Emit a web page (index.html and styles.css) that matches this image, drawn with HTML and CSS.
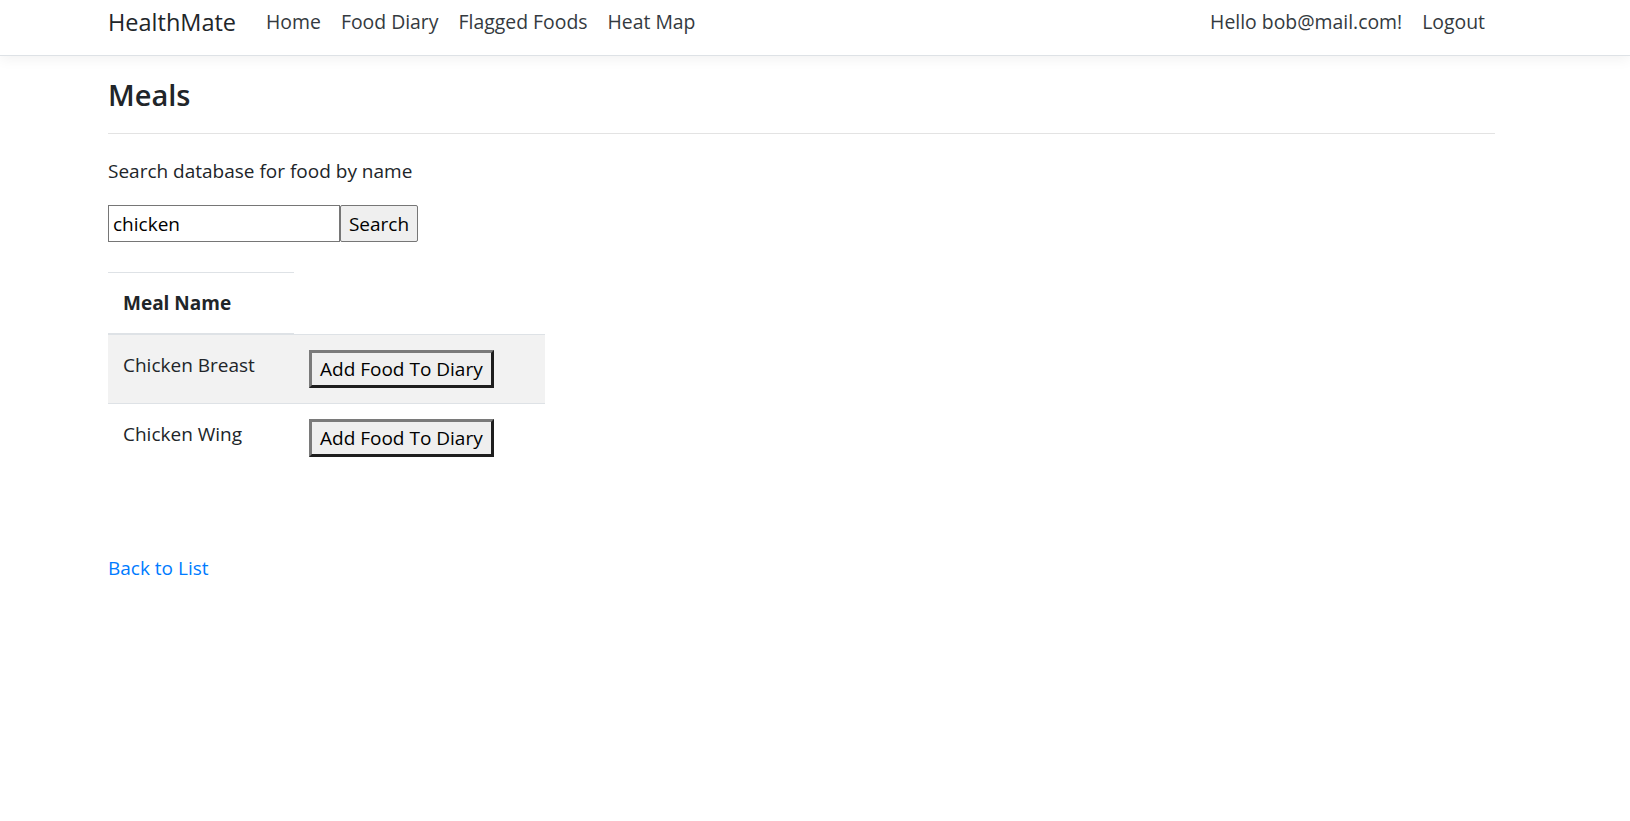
FILE: index.html
```html
<!DOCTYPE html>
<html lang="en">
<head>
<meta charset="utf-8">
<title>Meals - HealthMate</title>
<link rel="stylesheet" href="styles.css">
</head>
<body>
<header class="topbar">
  <nav class="container navbar">
    <a class="brand" href="#">HealthMate</a>
    <ul class="nav-list">
      <li><a class="nav-link" href="#">Home</a></li>
      <li><a class="nav-link" href="#">Food Diary</a></li>
      <li><a class="nav-link" href="#">Flagged Foods</a></li>
      <li><a class="nav-link" href="#">Heat Map</a></li>
    </ul>
    <ul class="nav-list nav-right">
      <li><a class="nav-link" href="#">Hello bob@mail.com!</a></li>
      <li><a class="nav-link" href="#">Logout</a></li>
    </ul>
  </nav>
</header>
<main class="container content">
  <h2 class="page-title">Meals</h2>
  <hr class="divider">
  <p class="lead-text">Search database for food by name</p>
  <form class="search-form">
    <input class="search-input" type="text" value="chicken">
    <button class="search-btn" type="button">Search</button>
  </form>
  <table class="meal-table">
    <colgroup>
      <col class="col-name">
      <col class="col-action">
    </colgroup>
    <thead>
      <tr><th class="head-cell">Meal Name</th></tr>
    </thead>
    <tbody>
      <tr class="row-odd">
        <td class="cell">Chicken Breast</td>
        <td class="cell"><button class="add-btn" type="button">Add Food To Diary</button></td>
      </tr>
      <tr>
        <td class="cell">Chicken Wing</td>
        <td class="cell"><button class="add-btn" type="button">Add Food To Diary</button></td>
      </tr>
    </tbody>
  </table>
  <div class="back-row">
    <a class="back-link" href="#">Back to List</a>
  </div>
</main>
</body>
</html>
```

FILE: styles.css
```css
* { box-sizing: border-box; }

body {
  margin: 0;
  font-family: "Open Sans", "Noto Sans", sans-serif;
  font-size: 19px;
  line-height: 30px;
  color: #212529;
  background: #fff;
}

.container {
  width: 1387px;
  margin-left: 108px;
}

.topbar {
  height: 56px;
  border-bottom: 1px solid #dee2e6;
  box-shadow: 0 4px 12px rgba(0, 0, 0, 0.05);
  background: #fff;
}

.navbar {
  display: flex;
  align-items: center;
  padding-top: 7px;
}

.brand {
  font-size: 23.5px;
  line-height: 30px;
  color: #212529;
  text-decoration: none;
  margin-right: 20px;
}

.nav-list {
  display: flex;
  list-style: none;
  margin: 0;
  padding: 0;
}

.nav-right {
  margin-left: auto;
}

.nav-link {
  display: block;
  padding: 0 10px;
  font-size: 19.4px;
  color: #343a40;
  text-decoration: none;
  line-height: 30px;
}

.content {
  padding-top: 21px;
}

.page-title {
  margin: 0 0 20px;
  font-size: 29px;
  line-height: 36px;
  font-weight: 600;
  color: #212529;
}

.divider {
  margin: 0 0 22px;
  border: 0;
  border-top: 1px solid #e3e3e3;
}

.lead-text {
  margin: 0 0 19px;
}

.search-form {
  display: flex;
  margin: 0 0 30px;
}

.search-input {
  width: 232px;
  height: 37px;
  border: 1px solid #767676;
  padding: 0 4px;
  font: inherit;
  color: #000;
  background: #fff;
}

.search-btn {
  height: 37px;
  width: 78px;
  border: 1px solid #767676;
  border-radius: 2px;
  background: #efefef;
  font: inherit;
  color: #000;
  padding: 0;
}

.meal-table {
  border-collapse: collapse;
  table-layout: fixed;
  width: 437px;
}

.col-name { width: 186px; }
.col-action { width: 251px; }

.head-cell {
  text-align: left;
  font-weight: 700;
  padding: 15px;
  border-top: 1px solid #dee2e6;
  border-bottom: 2px solid #dee2e6;
}

.cell {
  padding: 15px;
  vertical-align: top;
  border-top: 1px solid #dee2e6;
}

.row-odd {
  background: #f2f2f2;
}

.add-btn {
  height: 38px;
  padding: 0 8px;
  border-width: 3px;
  border-style: solid;
  border-color: #7a7a7a #1e1e1e #1e1e1e #7a7a7a;
  background: #efefef;
  font: inherit;
  color: #000;
  line-height: 30px;
}

.back-row {
  margin-top: 81px;
}

.back-link {
  color: #007bff;
  text-decoration: none;
}
```
